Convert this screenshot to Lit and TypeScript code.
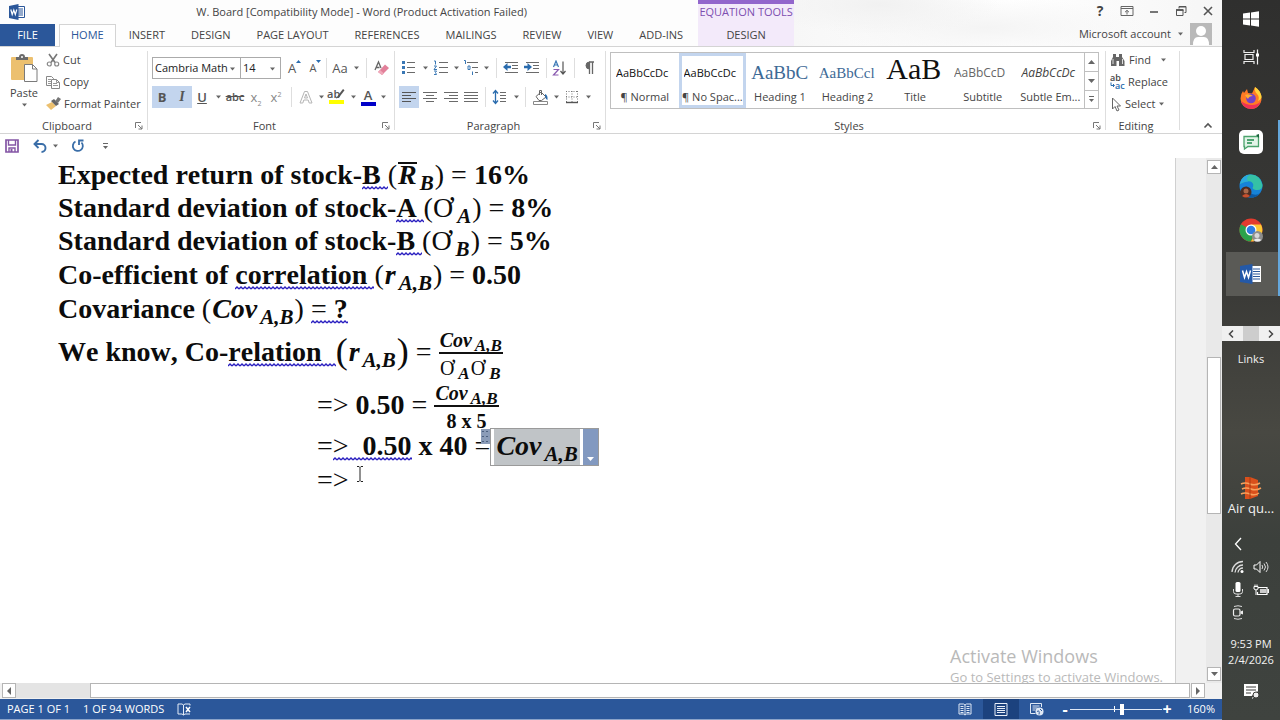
import { LitElement, html, svg, css, nothing } from "lit";
import { customElement } from "lit/decorators.js";
import { classMap } from "lit/directives/class-map.js";

type Glyph = { w: number; h: number; body: unknown };

const lines = (ys: number[], x1: number[], x2: number[], c = "#6a6a6a") =>
  ys.map((y, i) => svg`<path d="M${x1[i % x1.length]} ${y}.5H${x2[i % x2.length]}" stroke=${c} fill="none"/>`);

const G: Record<string, Glyph> = {
  word: { w: 16, h: 16, body: svg`<path d="M8 2.500h7.500v11H8z" fill="#fff" stroke="#2b579a"/><path d="M9 5h5M9 7h5M9 9h5M9 11h5" stroke="#2b579a"/><path d="M0 2 9.500 0V16L0 14z" fill="#2b579a"/><path d="M1.800 5.500 3.200 10.500 4.800 6 6.300 10.500 7.800 5.500" fill="none" stroke="#fff" stroke-width="1.200"/>` },
  paste: { w: 28, h: 30, body: svg`<rect x="1" y="4" width="22" height="23" rx="1" fill="#ecc06f"/><path d="M6 7V4h3q0-3 3-3t3 3h3v3z" fill="#6b6b6b"/><circle cx="12" cy="4" r="1" fill="#fff"/><path d="M14.500 11.500h8l4.500 4.500v12.500H14.500z" fill="#fff" stroke="#7a7a7a"/><path d="M22.500 11.500V16H27" fill="none" stroke="#7a7a7a"/>` },
  cut: { w: 14, h: 14, body: svg`<path d="M3 1 9 9.500M11 1 5 9.500" stroke="#777" stroke-width="1.600" fill="none"/><circle cx="3.300" cy="11" r="2" fill="none" stroke="#888" stroke-width="1.200"/><circle cx="10.700" cy="11" r="2" fill="none" stroke="#888" stroke-width="1.200"/>` },
  copy: { w: 14, h: 14, body: svg`<path d="M.5 1.500h5l2 2v7h-7z" fill="#fff" stroke="#888"/><path d="M2 4.500h3M2 6.500h3M2 8.500h3" stroke="#999"/><path d="M5.500 4.500h5l3 3v6h-8z" fill="#fff" stroke="#888"/><path d="M7 8.500h4M7 10.500h5M10.500 4.500v3h3" stroke="#999" fill="none"/>` },
  painter: { w: 15, h: 14, body: svg`<path d="M0 8 6 5l4 4-5 4z" fill="#ecc06f"/><path d="M5 4 8 2l5 5-3 2z" fill="#666"/><path d="M9 4.500 12 0l3 2-3 4z" fill="#777"/>` },
  caret: { w: 7, h: 4, body: svg`<path d="M1 .5h5L3.500 3.500z" fill="#666"/>` },
  eraser: { w: 16, h: 16, body: svg`<path d="M2 10 5.500 2 8 8M3.500 7.500h3" stroke="#666" stroke-width="1.300" fill="none"/><path d="M5 12 12 4.500 16 8 9 15z" fill="#e2809a"/><path d="M5 12 7 10l4 3.500-2 1.500z" fill="#f0a9ba"/>` },
  bullets: { w: 16, h: 16, body: svg`<g fill="#3a78b5"><rect x="1" y="1" width="3" height="3"/><rect x="1" y="6" width="3" height="3"/><rect x="1" y="11" width="3" height="3"/></g>${lines([2, 7, 12], [6], [14])}` },
  numbers: { w: 16, h: 16, body: svg`<path d="M1 1h1.500v3.500M1 6h2.500L1 9.500h3M1 11h2.500l-1 1.500 1 2H1" fill="none" stroke="#3a78b5"/>${lines([2, 7, 12], [6], [15])}` },
  levels: { w: 16, h: 16, body: svg`<path d="M1 .5h1.500V4M5 6h2v3.500H5zM9.500 11.500V15" fill="none" stroke="#3a78b5"/>${lines([2, 7, 12], [4, 9, 12], [15])}` },
  outdent: { w: 16, h: 16, body: svg`${lines([2, 12], [2], [15])}${lines([5, 8], [9], [15])}<path d="M0 7 4.500 3v2.800H8v2.400H4.500V11z" fill="#2a6cae"/>` },
  indent: { w: 16, h: 16, body: svg`${lines([2, 12], [2], [15])}${lines([5, 8], [9], [15])}<path d="M8 7 3.500 3v2.800H0v2.400h3.500V11z" fill="#2a6cae"/>` },
  sort: { w: 15, h: 16, body: svg`<path d="M1.500 7 4 1l2.500 6M2.500 5h3" fill="none" stroke="#3a78b5" stroke-width="1.200"/><path d="M1.500 9.500h5l-5 5.500h5" fill="none" stroke="#8a5bb0" stroke-width="1.200"/><path d="M11 1.500v12M8.500 11 11 14l2.500-3" fill="none" stroke="#555" stroke-width="1.200"/>` },
  pilcrow: { w: 12, h: 14, body: svg`<path d="M6 1h5M6.500 1v12M9.500 1v12" stroke="#666" stroke-width="1.300"/><path d="M6.500 1v7A3.500 3.500 0 0 1 6.500 1z" fill="#666" stroke="#666"/>` },
  alignL: { w: 16, h: 14, body: lines([2, 5, 8, 11], [1], [15, 10], "#555") },
  alignC: { w: 16, h: 14, body: lines([2, 5, 8, 11], [1, 4], [15, 12]) },
  alignR: { w: 16, h: 14, body: lines([2, 5, 8, 11], [1, 6], [15]) },
  alignJ: { w: 16, h: 14, body: lines([2, 5, 8, 11], [1], [15]) },
  spacing: { w: 16, h: 16, body: svg`<path d="M3.500 1.500v13M1 4.500 3.500 1.500 6 4.500M1 11.500l2.500 3 2.500-3" fill="none" stroke="#2a6cae" stroke-width="1.300"/>${lines([3, 6, 9, 12], [8], [14])}` },
  bucket: { w: 17, h: 16, body: svg`<path d="M4 7.500 9 3l5 5-4.500 3.500H7z" fill="#fff" stroke="#666"/><path d="M7.500 6V1.500h2V6" fill="none" stroke="#666"/><path d="M13 5q3 1 2.500 6-2-1-2.500-4z" fill="#2a6cae"/><path d="M1.500 12.500h14v3h-14z" fill="#fff" stroke="#888"/>` },
  borders: { w: 14, h: 14, body: svg`<path d="M1.500 1v11M12.500 1v11M7 1v11M1 1.500h12M1 7h12" stroke="#777" stroke-dasharray="1 1.500" fill="none"/><path d="M1 12.500h12" stroke="#555" stroke-width="1.400"/>` },
  textfx: { w: 14, h: 15, body: svg`<path d="M1 13 5.500 1.500h3L13 13h-2.800L9.200 10H4.800L3.800 13zM5.500 8h3L7 4z" fill="#fff" stroke="#b5b5b5"/>` },
  pen: { w: 18, h: 16, body: svg`<rect x="1" y="11" width="15" height="4" fill="#ffff00"/><path d="m8 9.500 2-3L15 0l1.500 1.300L11 8.500z" fill="#555"/>` },
  launcher: { w: 8, h: 8, body: svg`<path d="M.5 6V.5H6M3 3l4 4M7 3.500V7H3.500" fill="none" stroke="#777"/>` },
  find: { w: 16, h: 14, body: svg`<path d="M3 1h3v3h3V1h3v3l2.500 4v5H9V8H6.500v5H1V8l2-4z" fill="#666"/><path d="M3 6v5M12.500 6v5" stroke="#ddd"/>` },
  replace: { w: 15, h: 15, body: svg`<path d="M1 8.500v3h3M3 10l1.500 1.500L3 13" fill="none" stroke="#2a6cae"/>` },
  select: { w: 12, h: 15, body: svg`<path d="M2.500 1v11l2.500-2.500L7 14l2-1-2-4h3.500z" fill="#fff" stroke="#666"/>` },
  save: { w: 14, h: 14, body: svg`<path d="M1 1h12v12H1z" fill="#fff" stroke="#8455a5" stroke-width="1.700"/><path d="M3.500 1v5h7V1M4 13V9h6v4" fill="none" stroke="#8455a5" stroke-width="1.400"/><path d="M5.500 10v3h2v-3z" fill="#8455a5"/>` },
  undo: { w: 15, h: 14, body: svg`<path d="M2 5h6.500a4 4 0 0 1 0 8" fill="none" stroke="#3a6ea8" stroke-width="1.900"/><path d="M5.500 1 1.500 5l4 4" fill="none" stroke="#3a6ea8" stroke-width="1.900"/>` },
  redo: { w: 14, h: 14, body: svg`<path d="M4.500 2.500A5 5 0 1 0 10.500 3.500" fill="none" stroke="#3a6ea8" stroke-width="1.800"/><path d="M8 6V1.500h4.500" fill="none" stroke="#3a6ea8" stroke-width="1.800"/>` },
  more: { w: 7, h: 8, body: svg`<path d="M1 1.500h5" stroke="#666"/><path d="M1 4h5L3.500 7z" fill="#666"/>` },
  ribbon: { w: 14, h: 12, body: svg`<path d="M1 1.500h12v9H1zM1 3.500h12" fill="none" stroke="#666"/><path d="M7 9.500V5.500M5 7.200 7 5.300l2 1.900" fill="none" stroke="#666"/>` },
  min: { w: 12, h: 12, body: svg`<path d="M2 7h8" stroke="#555" stroke-width="1.600"/>` },
  restore: { w: 12, h: 12, body: svg`<path d="M1.500 5h6.500v5.500H1.500z" fill="none" stroke="#555"/><path d="M1 5h7.500" stroke="#555" stroke-width="1.800"/><path d="M4 3.500V1.500h7V7.500H9.500M4 2h7" fill="none" stroke="#555"/>` },
  close: { w: 12, h: 12, body: svg`<path d="m2 2 8 8m0-8-8 8" stroke="#555" stroke-width="1.600"/>` },
  avatar: { w: 22, h: 22, body: svg`<path d="M0 0h22v22H0z" fill="#b9b9b9"/><circle cx="11" cy="8" r="5" fill="#fff"/><path d="M3 22q0-8 5-8h6q5 0 5 8z" fill="#fff"/>` },
  chevUp: { w: 10, h: 7, body: svg`<path d="m1.500 5.500 3.500-3.500 3.500 3.500" fill="none" stroke="#555" stroke-width="1.600"/>` },
  up: { w: 7, h: 4, body: svg`<path d="M0 4h7L3.500 0z" fill="#666"/>` },
  down: { w: 7, h: 4, body: svg`<path d="M0 0h7L3.500 4z" fill="#666"/>` },
  tipUp: { w: 5, h: 3, body: svg`<path d="M0 3h5L2.500 0z" fill="#2a6cae"/>` },
  tipDown: { w: 5, h: 3, body: svg`<path d="M0 0h5L2.500 3z" fill="#2a6cae"/>` },
  left: { w: 4, h: 8, body: svg`<path d="M4 0v8L0 4z" fill="#666"/>` },
  right: { w: 4, h: 8, body: svg`<path d="M0 0v8l4-4z" fill="#666"/>` },
  proof: { w: 15, h: 13, body: svg`<path d="M6.500 2 5 1H1v10h4l1.500 1 1.500-1h5M6.500 2v10M6.500 2 8 1h5v1.500" fill="none" stroke="#e4ecf7"/><path d="m9 4 4 5m0-5L9 9" stroke="#fff" stroke-width="1.500"/>` },
  read: { w: 14, h: 13, body: svg`<path d="M7 2 5.500 1H1v10h4.500L7 12l1.500-1H13V1H8.500zM7 2v10" fill="none" stroke="#dfe8f5"/><path d="M2.500 3.500h3m-3 2h3m-3 2h3m-3 2h3m3-6h3m-3 2h3m-3 2h3m-3 2h3" stroke="#dfe8f5"/>` },
  print: { w: 14, h: 13, body: svg`<path d="M1 .5h12v12H1z" fill="none" stroke="#e8eef8"/><path d="M3 3.500h8m-8 2h8m-8 2h8m-8 2h8" stroke="#e8eef8"/>` },
  web: { w: 14, h: 13, body: svg`<path d="M11.500 4V.5H.5v10h5M2.500 3h7m-7 2h5m-5 2h3" fill="none" stroke="#dfe8f5"/><circle cx="9.500" cy="8.500" r="4" fill="#dfe8f5"/><path d="M7 8.500q3-2 2 3M10 6l2 2" stroke="#2b579a" fill="none"/>` },
  win: { w: 18, h: 18, body: svg`<path d="m1 3.500 7-1v6H1zM9 2.400l8-1.200v7.300H9zM1 9.500h7v6l-7-1zM9 9.500h8v7.300l-8-1.200z" fill="#fff"/>` },
  taskview: { w: 18, h: 18, body: svg`<path d="M2 2v2.500h10V2M2 16v-2.500h10V16M3 6.500h8v5H3z" fill="none" stroke="#eee" stroke-width="1.200"/><path d="M15.500 1.500v15" stroke="#eee" stroke-width="1.200"/><path d="M14 5.500h3v3h-3z" fill="#fff"/>` },
  firefox: { w: 24, h: 24, body: svg`<path d="M12 23A10.500 10.500 0 0 1 1.500 12.500Q1.500 8 4 5l1 2 3-4 1 4 4 .5L16 1q6 4 6.500 11A10.500 10.500 0 0 1 12 23z" fill="#ff7a25"/><path d="M2 15q3 8 10 8t10-8q-3 4-9 4T2 15z" fill="#ee3158"/><path d="M16 1q-1 4 2 7t1 7q4-2 3.500-5Q21 4 16 1z" fill="#ffd43a"/><circle cx="12" cy="12.500" r="4.800" fill="#7442c8"/><path d="M6 9q4-2 8 1-4 0-5 3-2-2-3-4z" fill="#ffae2e"/>` },
  chat: { w: 24, h: 24, body: svg`<rect width="24" height="24" rx="5" fill="#fff"/><path d="M5 6.500h14.500v10H9L5.500 19v-2.500H5z" fill="#e3f4e8" stroke="#4ba36c" stroke-width="1.300"/><path d="M8 10h7M8 13h5" stroke="#1f8a4c" stroke-width="1.600"/><path d="m17 5 3-1v4z" fill="#17603a"/>` },
  edge: { w: 24, h: 24, body: svg`<circle cx="12" cy="12" r="11.500" fill="#1683d8"/><path d="M1 10Q3 .5 12 .5T23.500 11q0 5-5 5-4 0-5-2 2-4-1-6T1 10z" fill="#35c1a5"/><path d="M1 10Q3 .5 12 .5q-6 2-3 7Q4 7 1 10z" fill="#2ba8e0"/><path d="M8 12q0 6 5 8t8-1q-3 4.500-9 4.500T5 17z" fill="#0c59a4"/><circle cx="7" cy="18" r="5.500" fill="#4b2c22"/><circle cx="7" cy="17" r="2.500" fill="#a9694b"/><path d="M3 22q4-4 8 0-4 3-8 0z" fill="#c8502e"/>` },
  chrome: { w: 24, h: 24, body: svg`<circle cx="12" cy="12" r="11.500" fill="#e33b2e"/><path d="M2 6.200A11.500 11.500 0 0 0 12 23.500L16 14z" fill="#2ba24c"/><path d="M12 23.500A11.500 11.500 0 0 0 22 6.500H12l5 8z" fill="#fcc934"/><circle cx="12" cy="12" r="5.500" fill="#fff"/><circle cx="12" cy="12" r="4.300" fill="#2f7de1"/><circle cx="18.500" cy="18.500" r="5.500" fill="#8d8d8d"/><circle cx="18" cy="17.500" r="2.500" fill="#d8d8d8"/><path d="M14.500 22q4-3 8 0-4 3-8 0z" fill="#ececec"/>` },
  wordBig: { w: 22, h: 22, body: svg`<path d="M11 3h10v16H11z" fill="#fff"/><path d="M13 6h7m-7 2.500h7M13 11h7m-7 2.500h7M13 16h7" stroke="#2b579a"/><path d="M0 3 12.500 1v20L0 19z" fill="#2459a8"/><path d="m2.500 7.500 2 7 2-6 2 6 2-7" fill="none" stroke="#fff" stroke-width="1.500"/>` },
  air: { w: 22, h: 24, body: svg`<path d="M5 1h5l8 3v16l-8 3H5z" fill="#d9501c"/><path d="M1 8q4-2 9 0t10-1M2 13q4-2 9 0t10-1M1 18q4-2 9 0t9-1" fill="none" stroke="#f7a05c" stroke-width="1.500"/><path d="M10 1v22" stroke="#a93b12"/>` },
  chevL: { w: 8, h: 14, body: svg`<path d="M7 1 1.500 7 7 13" fill="none" stroke="#fff" stroke-width="1.300"/>` },
  wifi: { w: 14, h: 14, body: svg`<path d="M1 12A11 11 0 0 1 12 1.500M4 12.500A8 8 0 0 1 12 5M7 12.500A5 5 0 0 1 12 8" fill="none" stroke="#ddd" stroke-width="1.300"/><circle cx="11" cy="11.500" r="1.500" fill="#fff"/>` },
  sound: { w: 16, h: 14, body: svg`<path d="M1 5h2.500L7 1.500v11L3.500 9H1z" fill="none" stroke="#fff"/><path d="M9 5q1.500 2 0 4M11 3.500q3 3.500 0 7M13 2q4 5 0 10" fill="none" stroke="#ddd"/>` },
  mic: { w: 12, h: 15, body: svg`<rect x="3.500" y="0" width="5" height="10" rx="1.500" fill="#fff"/><path d="M1.500 7v2.500q0 2.500 2.500 2.500h4q2.500 0 2.500-2.500V7M6 12v2.500M3.500 14.500h5" fill="none" stroke="#ddd"/>` },
  battery: { w: 16, h: 12, body: svg`<path d="M5 3.500h9v7H4.500V8" fill="none" stroke="#fff" stroke-width="1.200"/><path d="M7 5h6v4H7z" fill="#ccc"/><path d="M15.200 5v4" stroke="#fff" stroke-width="1.500"/><path d="M1 2.500h4V5q-2 2-4 0zM2 .5v2M4 .5v2M3 6v5" stroke="#fff" fill="none"/>` },
  meet: { w: 12, h: 15, body: svg`<path d="M2 1.500q4-1.500 8 0M2 13.500q4 1.500 8 0" fill="none" stroke="#ddd"/><rect x="1.500" y="4" width="6.500" height="7" rx="1.500" fill="none" stroke="#eee" stroke-width="1.200"/><path d="m8.500 6.500 2.500-1v4l-2.500-1z" fill="#eee"/>` },
  note: { w: 18, h: 17, body: svg`<path d="M2 1h14v12h-3l-3 3v-3H2z" fill="#fff"/><path d="M4 4h10M4 7h10M4 10h5" stroke="#3b3b38"/><path d="m10 14 6-5" stroke="#3b3b38" stroke-width="2"/><circle cx="14" cy="12" r="3" fill="#eee" stroke="#3b3b38"/>` },
  ibeam: { w: 8, h: 16, body: svg`<path d="M1 .5h2L4 1.500 5 .5h2M4 1.500v13M1 15.500h2l1-1 1 1h2" fill="none" stroke="#222"/>` },
};

const icon = (name: string) => {
  const g = G[name];
  return html`<svg class="ic" width=${g.w} height=${g.h} viewBox="0 0 ${g.w} ${g.h}" aria-hidden="true">${g.body}</svg>`;
};

/* Every toolbar entry: label, button width, content, optional state. */
type Tool = { t: string; w: number; c?: unknown; on?: boolean };
const sep = (w: number): Tool => ({ t: "", w });
const arrow = (t: string, w = 12): Tool => ({ t: `${t} options`, w, c: icon("caret") });

const toolRow = (items: Tool[]) => items.map((i) => i.c === undefined
  ? html`<span class="sep" style="width:${i.w}px"></span>`
  : html`<button class=${classMap({ tool: true, on: !!i.on })} style="width:${i.w}px" aria-label=${i.t}>${i.c}</button>`);

const fontRow1: Tool[] = [
  { t: "Grow font", w: 22, c: html`<span class="gl">A</span><span class="tip">${icon("tipUp")}</span>` },
  { t: "Shrink font", w: 20, c: html`<span class="gl small">A</span><span class="tip">${icon("tipDown")}</span>` },
  sep(6),
  { t: "Change case", w: 22, c: html`<span class="gl">Aa</span>` }, arrow("Case", 10),
  sep(10),
  { t: "Clear formatting", w: 20, c: icon("eraser") },
];
const fontRow2: Tool[] = [
  { t: "Bold", w: 20, c: html`<b class="gl">B</b>`, on: true },
  { t: "Italic", w: 20, c: html`<i class="gl ital">I</i>`, on: true },
  { t: "Underline", w: 20, c: html`<u class="gl">U</u>` }, arrow("Underline"),
  { t: "Strikethrough", w: 22, c: html`<s class="gl small">abc</s>` },
  { t: "Subscript", w: 20, c: html`<span class="gl dim">x<sub>2</sub></span>` },
  { t: "Superscript", w: 20, c: html`<span class="gl dim">x<sup>2</sup></span>` },
  sep(10),
  { t: "Text effects", w: 20, c: icon("textfx") }, arrow("Text effects", 10),
  { t: "Highlight", w: 22, c: html`<span class="gl small over">ab</span>${icon("pen")}` }, arrow("Highlight", 10),
  { t: "Font color", w: 20, c: html`<span class="gl bar">A</span>` }, arrow("Font color", 10),
];
const paraRow1: Tool[] = [
  { t: "Bullets", w: 20, c: icon("bullets") }, arrow("Bullets"),
  { t: "Numbering", w: 20, c: icon("numbers") }, arrow("Numbering", 10),
  { t: "Multilevel list", w: 20, c: icon("levels") }, arrow("Multilevel", 10),
  sep(10),
  { t: "Decrease indent", w: 20, c: icon("outdent") },
  { t: "Increase indent", w: 22, c: icon("indent") },
  sep(6),
  { t: "Sort", w: 20, c: icon("sort") },
  sep(10),
  { t: "Show marks", w: 20, c: icon("pilcrow") },
];
const paraRow2: Tool[] = [
  { t: "Align left", w: 20, c: icon("alignL"), on: true },
  { t: "Center", w: 22, c: icon("alignC") },
  { t: "Align right", w: 20, c: icon("alignR") },
  { t: "Justify", w: 20, c: icon("alignJ") },
  sep(8),
  { t: "Line spacing", w: 22, c: icon("spacing") }, arrow("Spacing", 10),
  sep(8),
  { t: "Shading", w: 22, c: icon("bucket") }, arrow("Shading", 10),
  { t: "Borders", w: 22, c: icon("borders") }, arrow("Borders", 10),
];

const styleCards = [
  { p: "AaBbCcDc", n: "¶ Normal", k: "" },
  { p: "AaBbCcDc", n: "¶ No Spac...", k: "sel" },
  { p: "AaBbC", n: "Heading 1", k: "h1" },
  { p: "AaBbCcl", n: "Heading 2", k: "h2" },
  { p: "AaB", n: "Title", k: "ttl" },
  { p: "AaBbCcD", n: "Subtitle", k: "subt" },
  { p: "AaBbCcDc", n: "Subtle Em...", k: "em" },
];

const tabs = ["HOME", "INSERT", "DESIGN", "PAGE LAYOUT", "REFERENCES", "MAILINGS", "REVIEW", "VIEW", "ADD-INS"];

const AB = html`<sub>A,B</sub>`;
const cov = html`<i class="m">Cov${AB}</i>`;
const eq = html`<span class="r">=</span>`;

@customElement("word-ribbon")
class WordRibbon extends LitElement {
  static styles = css`
    :host { display: block; color: #444; font: 11px/16px "Open Sans", "Noto Sans", sans-serif; }
    button, select { font: inherit; color: inherit; border: 0; padding: 0; margin: 0; background: none; border-radius: 0; }
    button { display: inline-flex; align-items: center; justify-content: center; white-space: nowrap; position: relative; }
    .ic { display: block; flex: none; }
    .head { display: flex; height: 46px; background: #fdfdfd; border-bottom: 1px solid #d4d4d4; }
    .left { display: flex; flex-direction: column; }
    .title { display: flex; align-items: center; height: 24px; padding-left: 9px; }
    .title h1 { flex: 1; margin: 0; font-size: 11px; font-weight: 400; text-align: center; }
    .tabs { display: flex; height: 22px; padding-right: 2px; }
    .tab { padding: 0 13px; height: 22px; }
    .tab.file { background: #2b579a; color: #fff; width: 55px; margin-right: 4px; }
    .tab.home { color: #2b579a; background: #fff; border: 1px solid #d4d4d4; border-bottom: 0; height: 23px; padding: 0 11px 2px; }
    .eq { width: 96px; flex: none; background: #f3eafa; border-top: 4px solid #9266cc; display: flex; flex-direction: column; align-items: center; box-sizing: border-box; }
    .eq span { color: #7d4fb0; line-height: 16px; padding-bottom: 4px; white-space: nowrap; }
    .right { flex: 1; display: flex; flex-direction: column; align-items: flex-end; background: radial-gradient(ellipse 120px 30px at 20% 10%, #f1f1f1, transparent), radial-gradient(ellipse 160px 30px at 45% 60%, #f4f4f4, transparent), linear-gradient(90deg, #f7f7f7, #fff 50%, #f6f6f6); }
    .wins { display: flex; height: 22px; padding-right: 4px; gap: 7px; }
    .wins button { width: 20px; }
    .q { font-size: 14px; font-weight: 700; }
    .acct { display: flex; align-items: center; height: 24px; padding-right: 10px; gap: 6px; }
    .body { display: flex; height: 86px; border-bottom: 1px solid #d4d4d4; background: #fff; }
    .group { display: grid; grid-template-rows: 69px 15px; position: relative; box-sizing: border-box; padding: 2px 4px 0; }
    .group::after { content: ""; position: absolute; right: 0; top: 4px; bottom: 3px; width: 1px; background: #dedede; }
    .clip { width: 148px; } .font { width: 247px; } .para { width: 211px; } .sty { flex: 1; min-width: 0; } .edit { width: 74px; } .fold { width: 42px; }
    .fold::after { display: none; }
    .fold button { grid-row: 2; justify-self: end; width: 20px; }
    footer { display: flex; justify-content: center; align-items: center; position: relative; padding-right: 14px; }
    footer button { position: absolute; right: 0; bottom: 2px; width: 10px; height: 10px; }
    .cl { display: grid; grid-template-columns: 40px 1fr; gap: 2px; }
    .paste { flex-direction: column; justify-content: flex-start; gap: 2px; padding-top: 4px; }
    .stack { display: grid; grid-template-rows: repeat(3, 22px); justify-items: start; }
    .stack button { gap: 3px; justify-content: flex-start; }
    .row { display: flex; align-items: center; height: 22px; margin-top: 7px; }
    .row:first-child { margin-top: 8px; }
    .tool { height: 22px; flex: none; }
    .on { background: #c3d5ee; }
    .sep { height: 20px; flex: none; background: linear-gradient(#dedede, #dedede) center / 1px 100% no-repeat; }
    .combo { position: relative; display: flex; border: 1px solid #ababab; height: 22px; box-sizing: border-box; background: #fff; color: #222; }
    .combo + .combo { border-left: 0; }
    .combo select { appearance: none; width: 87px; padding-left: 2px; }
    .combo.sz select { width: 39px; }
    .combo .ic { position: absolute; right: 4px; top: 9px; pointer-events: none; }
    .gl { font-size: 13px; line-height: 16px; color: #555; }
    .tip { position: absolute; right: 2px; top: 3px; }
    .gl.ital { font-family: "Liberation Serif", serif; font-weight: 700; font-size: 14px; }
    u.gl { font-weight: 600; } .gl.small { font-size: 11px; } s.gl { font-weight: 600; }
    .gl sub, .gl sup { font-size: 7px; line-height: 0; }
    .gl.dim { color: #888; }
    .gl.over { position: absolute; left: 1px; top: 0; font-weight: 600; }
    .gl.bar { font-weight: 600; border-bottom: 4px solid #0000c8; width: 15px; line-height: 13px; text-align: center; }
    .gallery { display: flex; margin: 3px 3px 0 0; height: 57px; border: 1px solid #bfbfbf; box-sizing: border-box; }
    .card { flex: 1 1 0; min-width: 0; flex-direction: column; justify-content: flex-start; padding: 0 5px; overflow: hidden; }
    .card .p { width: 100%; height: 30px; line-height: 40px; overflow: hidden; text-align: left; color: #111; }
    .card .n { line-height: 16px; padding-top: 6px; }
    .card.sel { box-shadow: inset 0 0 0 3px #c3d5ee; }
    .card.h1 .p, .card.h2 .p, .card.ttl .p { font-family: "Liberation Serif", serif; color: #3d6a96; }
    .card.h1 .p { font-size: 19px; } .card.h2 .p { font-size: 15px; }
    .card.ttl .p { font-size: 30px; color: #111; line-height: 32px; }
    .card.subt .p { color: #666; font-size: 12px; } .card.em .p { font-style: italic; color: #444; font-size: 12px; }
    .nav { display: grid; grid-template-rows: repeat(3, 1fr); width: 13px; border-left: 1px solid #bfbfbf; }
    .nav button + button { border-top: 1px solid #bfbfbf; }
    .qat { display: flex; align-items: center; height: 24px; padding-left: 2px; background: #fff; }
    .qat button { width: 20px; height: 20px; } .qat .n { width: 10px; } .qat .g { margin-left: 8px; } .qat .c { margin-left: 12px; }
    .ab { position: relative; width: 15px; height: 16px; font-size: 9px; line-height: 8px; text-align: left; font-weight: 600; display: block; }
    .ab .ic { position: absolute; left: 0; top: 0; } .ab em { display: block; font-style: normal; color: #2a6cae; padding-left: 5px; }
  `;
  private group(cls: string, name: string, body: unknown, launch = true) {
    return html`<section class="group ${cls}"><div>${body}</div>
      <footer>${name}${launch ? html`<button aria-label="${name} settings">${icon("launcher")}</button>` : nothing}</footer></section>`;
  }
  render() {
    return html`
      <div class="head">
        <div class="left">
          <div class="title">${icon("word")}<h1>W. Board [Compatibility Mode] - Word (Product Activation Failed)</h1></div>
          <nav class="tabs"><button class="tab file">FILE</button>${tabs.map((t) => html`<button class="tab ${t === "HOME" ? "home" : ""}">${t}</button>`)}</nav>
        </div>
        <div class="eq"><span>EQUATION TOOLS</span><button class="tab">DESIGN</button></div>
        <div class="right">
          <div class="wins"><button class="q" aria-label="Help">?</button>${["ribbon", "min", "restore", "close"].map((n) => html`<button aria-label=${n}>${icon(n)}</button>`)}</div>
          <div class="acct"><button>Microsoft account</button>${icon("caret")}${icon("avatar")}</div>
        </div>
      </div>
      <div class="body">
        ${this.group("clip", "Clipboard", html`<div class="cl">
          <button class="paste">${icon("paste")}<span>Paste</span>${icon("caret")}</button>
          <div class="stack"><button>${icon("cut")}Cut</button><button>${icon("copy")}Copy</button><button>${icon("painter")}Format Painter</button></div></div>`)}
        ${this.group("font", "Font", html`
          <div class="row"><label class="combo"><select aria-label="Font"><option>Cambria Math</option></select>${icon("caret")}</label>
            <label class="combo sz"><select aria-label="Font size"><option>14</option></select>${icon("caret")}</label>${toolRow(fontRow1)}</div>
          <div class="row">${toolRow(fontRow2)}</div>`)}
        ${this.group("para", "Paragraph", html`<div class="row">${toolRow(paraRow1)}</div><div class="row">${toolRow(paraRow2)}</div>`)}
        ${this.group("sty", "Styles", html`<div class="gallery">
          ${styleCards.map((s) => html`<button class="card ${s.k}"><span class="p">${s.p}</span><span class="n">${s.n}</span></button>`)}
          <div class="nav"><button aria-label="Previous">${icon("up")}</button><button aria-label="Next">${icon("down")}</button><button aria-label="More">${icon("more")}</button></div></div>`)}
        ${this.group("edit", "Editing", html`<div class="stack">
          <button>${icon("find")}Find&nbsp;&nbsp;${icon("caret")}</button>
          <button><span class="ab">${icon("replace")}ab<em>ac</em></span>Replace</button>
          <button>${icon("select")}Select${icon("caret")}</button></div>`, false)}
        <div class="group fold"><button aria-label="Collapse the ribbon">${icon("chevUp")}</button></div>
      </div>
      <div class="qat"><button aria-label="Save">${icon("save")}</button>
        <button class="g" aria-label="Undo">${icon("undo")}</button><button class="n" aria-label="Undo list">${icon("caret")}</button>
        <button class="g" aria-label="Redo">${icon("redo")}</button><button class="n c" aria-label="Customize">${icon("more")}</button></div>`;
  }
}

@customElement("word-page")
class WordPage extends LitElement {
  static styles = css`
    :host { display: flex; flex: 1; min-height: 0; background: #f1f1f1; position: relative; }
    .ic { display: block; }
    .page { flex: 1; background: #fff; border-right: 1px solid #d0d0d0; padding-left: 58px; font: 700 28px/33px "Liberation Serif", serif; font-kerning: none; color: #0c0c0c; overflow: hidden; }
    p { margin: 0; white-space: pre; height: 33px; }
    .t34 { height: 34px; line-height: 34px; }
    .t54 { height: 54px; line-height: 54px; }
    .t52 { height: 51px; line-height: 52px; padding-left: 259px; }
    .t32 { height: 32px; line-height: 32px; padding-left: 259px; }
    .last { height: 34px; line-height: 36px; padding-left: 259px; position: relative; }
    .w { background: url("data:image/svg+xml,%3Csvg xmlns='http://www.w3.org/2000/svg' width='4' height='4'%3E%3Cpath d='M0 3 2 1 4 3' fill='none' stroke='%232a1fc0' stroke-width='1.400'/%3E%3C/svg%3E") left bottom / 4px 4px repeat-x; }
    .r { font-weight: 400; }
    .m { font-style: italic; padding-left: 1px; }
    sub { font-size: 21px; line-height: 0; vertical-align: -6px; padding: 0 1px 0 3px; }
    .bar { border-top: 2px solid #111; display: inline-block; line-height: 22px; }
    .tall { font-size: 36px; font-weight: 400; line-height: 0; vertical-align: -2px; }
    .frac { display: inline-flex; flex-direction: column; align-items: center; vertical-align: middle; font-size: 20px; line-height: 24px; }
    .frac > span + span { border-top: 2px solid #111; padding-top: 1px; line-height: 26px; align-self: stretch; text-align: center; }
    .frac sub { font-size: 17px; vertical-align: -4px; }
    .box { display: inline-flex; vertical-align: middle; height: 38px; margin: -8px 0 -4px; border: 1px solid #9a9a9a; box-sizing: border-box; background: #fff; position: relative; line-height: 34px; }
    .box .in { background: #c0c4c7; margin-left: 3px; padding: 0 1px; }
    .box .dd { width: 15px; margin-left: 3px; background: #8299c0; border: 0; padding: 0 0 4px; display: flex; align-items: flex-end; justify-content: center; }
    .dd path { fill: #fff; }
    .grip { position: absolute; left: -10px; top: 0; width: 9px; height: 15px; background: radial-gradient(circle, #4c607f 1px, transparent 1px) 0 0 / 4px 5px #8b9cb8; }
    .mouse { position: absolute; left: 298px; top: 4px; }
    .mark { position: absolute; left: 950px; bottom: -4px; color: #b9b9b9; font: 13px/20px "Open Sans", sans-serif; white-space: nowrap; }
    .mark b { display: block; font-weight: 400; font-size: 18px; line-height: 22px; }
    .vs { width: 16px; margin-left: 30px; display: flex; flex-direction: column; align-items: center; padding: 2px 0; background: #e9e9e9; }
    .vs button { width: 14px; height: 14px; border: 1px solid #b5b5b5; background: #fff; padding: 0; display: grid; place-items: center; flex: none; }
    .track { flex: 1; display: grid; grid-template-rows: 183px 157px 1fr; width: 100%; }
    .thumb { grid-row: 2; background: #fff; border: 1px solid #b5b5b5; margin: 0 1px; }
  `;
  render() {
    return html`<main class="page">
<p>Expected return of stock-<span class="w">B </span><span class="r">(</span><i class="m"><span class="bar">R</span><sub>B</sub></i><span class="r">)</span> ${eq} 16%</p>
<p>Standard deviation of stock-<span class="w">A </span><span class="r">(Ơ</span><i class="m"><sub>A</sub></i><span class="r">)</span> ${eq} 8%</p>
<p class="t34">Standard deviation of stock-<span class="w">B </span><span class="r">(Ơ</span><i class="m"><sub>B</sub></i><span class="r">)</span> ${eq} 5%</p>
<p class="t34">Co-efficient of <span class="w">correlation </span><span class="r">(</span><i class="m">r${AB}</i><span class="r">)</span> ${eq} 0.50</p>
<p>Covariance <span class="r">(</span>${cov}<span class="r">)</span> <span class="w">${eq} ?</span></p>
<p class="t54">We know, Co-<span class="w">relation  </span><span class="tall">(</span><i class="m">r${AB}</i><span class="tall">)</span> ${eq} <span class="frac"><span>${cov}</span><span><span class="r">Ơ</span><i class="m"><sub>A</sub></i><span class="r">Ơ</span><i class="m"><sub>B</sub></i></span></span></p>
<p class="t52"><span class="r">=&gt;</span> 0.50 ${eq} <span class="frac"><span>${cov}</span><span>8 x 5</span></span></p>
<p class="t32">${eq}<span class="w"><span class="r">&gt;</span>  0.50</span> x 40 ${eq}<span class="box"><span class="grip"></span><span class="in">${cov}</span><button class="dd" aria-label="Equation options">${icon("down")}</button></span></p>
<p class="last"><span class="r">=&gt;</span><span class="mouse">${icon("ibeam")}</span></p>
</main>
<div class="vs"><button aria-label="Scroll up">${icon("up")}</button><div class="track"><div class="thumb"></div></div><button aria-label="Scroll down">${icon("down")}</button></div>
<div class="mark"><b>Activate Windows</b>Go to Settings to activate Windows.</div>`;
  }
}

@customElement("word-footer")
class WordFooter extends LitElement {
  static styles = css`
    :host { display: block; font: 11px/16px "Open Sans", sans-serif; position: relative; }
    .ic { display: block; }
    button { border: 0; padding: 0; background: none; color: inherit; font: inherit; display: grid; place-items: center; }
    .hs { display: flex; height: 16px; padding: 0 17px 1px 2px; background: #f1f1f1; box-sizing: border-box; }
    .hs button { width: 14px; border: 1px solid #b5b5b5; background: #fff; }
    .gap { width: 74px; background: #e4e4e4; }
    .thumb { flex: 1; background: #fff; border: 1px solid #b5b5b5; margin-right: 1px; }
    .bar { display: flex; align-items: center; height: 20px; background: #2b579a; color: #fff; padding: 0 7px; border-bottom: 1px solid #8ba3c9; }
    .bar .w { margin: 0 13px; }
    .sp { flex: 1; }
    .v { width: 36px; height: 20px; } .v.on { background: #1c427e; }
    .z { width: 10px; font-size: 16px; font-weight: 700; line-height: 20px; }
    .v + .z { margin-left: 5px; }
    input { appearance: none; width: 92px; height: 16px; margin: 0; background: linear-gradient(#dfe8f5, #dfe8f5) center / 100% 1px no-repeat, linear-gradient(#fff, #fff) 44px center / 1px 6px no-repeat; }
    input::-webkit-slider-thumb { appearance: none; width: 4px; height: 11px; background: #fff; }
    .pc { margin-left: 13px; width: 30px; text-align: right; }
  `;
  render() {
    return html`<div class="hs"><button aria-label="Scroll left">${icon("left")}</button><div class="gap"></div><div class="thumb"></div><button aria-label="Scroll right">${icon("right")}</button></div>
    <div class="bar"><span>PAGE 1 OF 1</span><span class="w">1 OF 94 WORDS</span>${icon("proof")}<span class="sp"></span>
      <button class="v" aria-label="Read mode">${icon("read")}</button><button class="v on" aria-label="Print layout">${icon("print")}</button><button class="v" aria-label="Web layout">${icon("web")}</button>
      <button class="z" aria-label="Zoom out">-</button><input type="range" aria-label="Zoom" min="0" max="100" value="57"><button class="z" aria-label="Zoom in">+</button><span class="pc">160%</span></div>`;
  }
}

@customElement("side-taskbar")
class SideTaskbar extends LitElement {
  static styles = css`
    :host { display: flex; flex-direction: column; width: 58px; flex: none; color: #f2f2f2; background: linear-gradient(#2f2f2e, #3a3a37 40%, #484842 60%, #3c403c 75%, #3f433f); font: 12px/16px "Open Sans", sans-serif; }
    .ic { display: block; }
    button { border: 0; padding: 0; background: none; color: inherit; display: grid; place-items: center; }
    .sys { height: 38px; }
    .app { height: 44px; margin-left: 4px; padding-right: 2px; border-right: 2px solid transparent; }
    .app.run { border-right-color: #64a7dc; }
    .app.act { background: #5a5a56; }
    .scroll { display: flex; height: 15px; background: #f0f0f0; margin: 30px 0 10px; color: #444; justify-content: space-between; }
    .scroll button { width: 18px; } .scroll path { stroke: #444; }
    .scroll span { width: 16px; background: #cdcdcd; }
    .links, .txt { text-align: center; font-size: 11px; white-space: nowrap; }
    .air { margin-top: auto; display: grid; justify-items: center; }
    .air span { font-size: 13px; line-height: 16px; }
    .tray { display: grid; grid-template-columns: 22px 24px; grid-auto-rows: 23px; padding: 16px 6px 12px 5px; place-items: center; }
    .note { height: 46px; margin-bottom: 6px; }
  `;
  render() {
    return html`
      <button class="sys" aria-label="Start">${icon("win")}</button><button class="sys" aria-label="Task view">${icon("taskview")}</button>
      ${[["firefox", ""], ["chat", "run"], ["edge", "run"], ["chrome", "run"], ["wordBig", "run act"]].map(([n, c]) => html`<button class="app ${c}" aria-label=${n}>${icon(n)}</button>`)}
      <div class="scroll"><button aria-label="Back"><svg width="6" height="8"><path d="M5 .5 1.500 4 5 7.500" fill="none" stroke-width="1.500"/></svg></button><span></span><button aria-label="Forward"><svg width="6" height="8"><path d="M1 .5 4.500 4 1 7.500" fill="none" stroke-width="1.500"/></svg></button></div>
      <div class="links">Links</div>
      <div class="air">${icon("air")}<span>Air qu...</span></div>
      <div class="tray">${icon("chevL")}<span></span>${icon("wifi")}${icon("sound")}${icon("mic")}${icon("battery")}${icon("meet")}</div>
      <div class="txt">9:53 PM<br>2/4/2026</div>
      <button class="note" aria-label="Notifications">${icon("note")}</button>`;
  }
}

@customElement("app-root")
class AppRoot extends LitElement {
  static styles = css`
    :host { display: flex; height: 100vh; overflow: hidden; background: #fff; }
    .win { flex: 1; min-width: 0; display: flex; flex-direction: column; }
  `;
  render() {
    return html`<div class="win"><word-ribbon></word-ribbon><word-page></word-page><word-footer></word-footer></div><side-taskbar></side-taskbar>`;
  }
}
